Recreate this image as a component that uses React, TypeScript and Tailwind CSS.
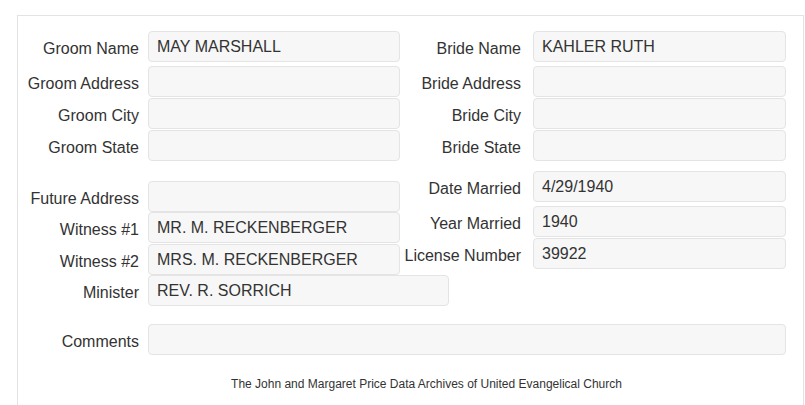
const FONT = "font-['Liberation_Sans',Arial,sans-serif]";

type FieldProps = {
  label: string;
  value?: string;
  side: "left" | "right";
  inputW?: string;
  className?: string;
};

function Field({ label, value = "", side, inputW, className = "" }: FieldProps) {
  const gap = side === "left" ? "gap-[9px]" : "gap-[12px]";
  const w = inputW ?? (side === "left" ? "w-[252px]" : "w-[253px]");
  return (
    <div className={`flex items-center ${gap} ${className}`}>
      <div className="w-[121px] shrink-0 whitespace-nowrap pt-1 text-right text-[16px] text-[#333]">{label}</div>
      <div className={`${w} flex h-[31px] shrink-0 items-center rounded-[4px] border border-[#e4e4e4] bg-[#f7f7f7] px-2 text-[16px] text-[#333]`}>
        {value}
      </div>
    </div>
  );
}

export default function App() {
  return (
    <div className={`h-[405px] w-[805px] overflow-hidden bg-white ${FONT}`}>
      <div className="ml-[17px] mt-[15px] h-[420px] w-[787px] border border-[#e3e3e3] pt-[15px]">
        {/* Names */}
        <div className="flex">
          <div className="w-[382px]">
            <Field side="left" label="Groom Name" value="MAY MARSHALL" />
            <Field side="left" label="Groom Address" className="mt-[4px]" />
            <Field side="left" label="Groom City" className="mt-[1px]" />
            <Field side="left" label="Groom State" className="mt-[1px]" />
          </div>
          <div className="w-[386px]">
            <Field side="right" label="Bride Name" value="KAHLER RUTH" />
            <Field side="right" label="Bride Address" className="mt-[4px]" />
            <Field side="right" label="Bride City" className="mt-[1px]" />
            <Field side="right" label="Bride State" className="mt-[1px]" />
          </div>
        </div>

        {/* Marriage details */}
        <div className="flex items-start">
          <div className="w-[382px] pt-[20px]">
            <Field side="left" label="Future Address" />
            <Field side="left" label="Witness #1" value="MR. M. RECKENBERGER" />
            <Field side="left" label="Witness #2" value="MRS. M. RECKENBERGER" className="mt-[1px]" />
            <Field side="left" label="Minister" value="REV. R. SORRICH" inputW="w-[301px]" />
          </div>
          <div className="w-[386px] pt-[10px]">
            <Field side="right" label="Date Married" value="4/29/1940" />
            <Field side="right" label="Year Married" value="1940" className="mt-[4px]" />
            <Field side="right" label="License Number" value="39922" className="mt-[1px]" />
          </div>
        </div>

        {/* Comments */}
        <Field side="left" label="Comments" inputW="w-[638px]" className="mt-[18px]" />

        <p className="mt-[21px] pl-[32px] text-center text-[12px] leading-[17px] text-[#333]">
          The John and Margaret Price Data Archives of United Evangelical Church
        </p>
      </div>
    </div>
  );
}
